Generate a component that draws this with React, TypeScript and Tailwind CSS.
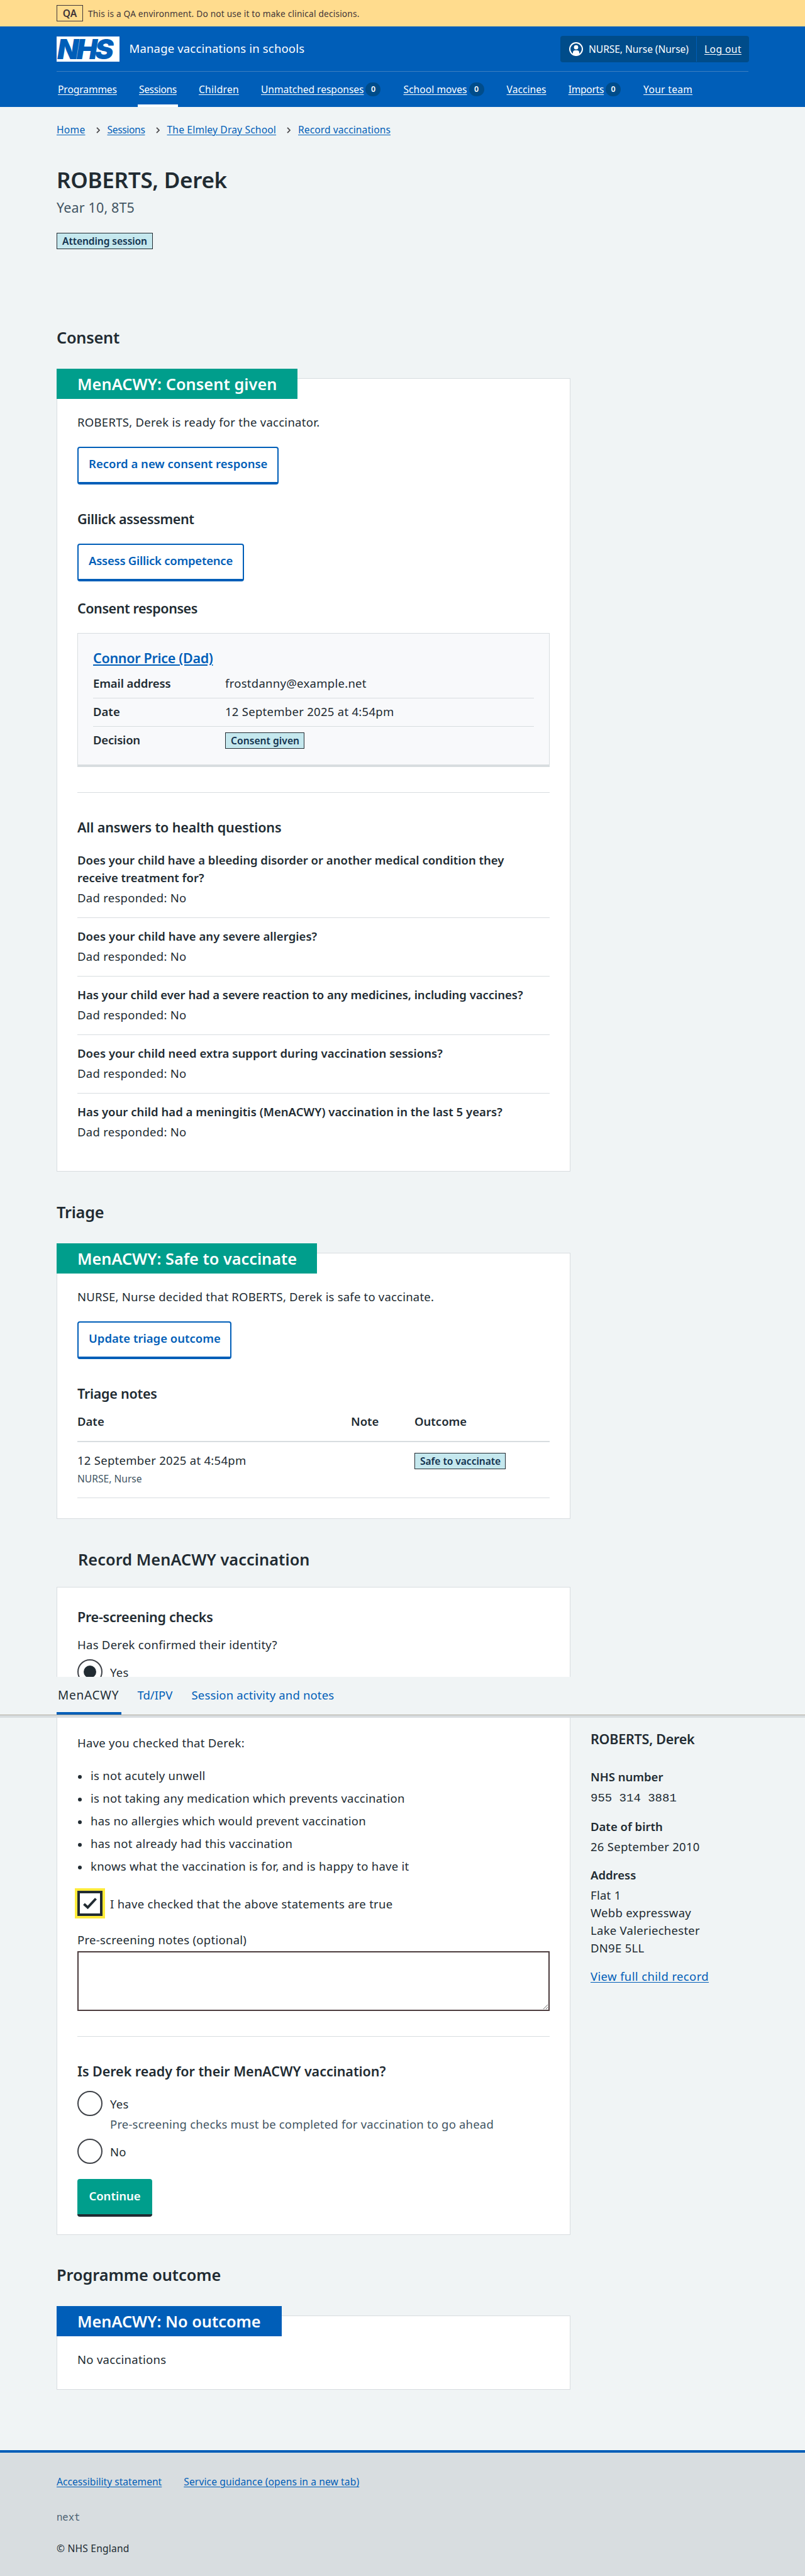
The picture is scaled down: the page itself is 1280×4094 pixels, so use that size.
import type { ReactNode } from "react";

const body = "text-[18.5px] leading-7 tracking-[0.015em]";
const bodyBold = "text-[18.5px] leading-7 font-semibold";
const small = "text-[15.6px] leading-6 whitespace-nowrap";
const heading = "text-[25.3px] leading-8 font-semibold whitespace-nowrap";
const subheading = "text-[21.5px] leading-8 font-semibold whitespace-nowrap";

function Tag({ children, className = "" }: { children: ReactNode; className?: string }) {
  return (
    <strong
      className={`inline-block h-[26px] border border-[#212b32] bg-[#c5e8ee] px-2 text-[15.6px] leading-6 font-semibold whitespace-nowrap text-[#12324f] ${className}`}
    >
      {children}
    </strong>
  );
}

function Card({ label, tone, labelClass = "", className = "", children }: { label?: string; tone?: string; labelClass?: string; className?: string; children: ReactNode }) {
  return (
    <section className={`relative border border-[#d8dde0] bg-white px-8 ${className}`}>
      {label && (
        <h3 className={`absolute -top-4 -left-px h-12 py-2 pl-[33px] text-white ${heading} ${tone} ${labelClass}`}>{label}</h3>
      )}
      {children}
    </section>
  );
}

function OutlineButton({ children, className = "" }: { children: ReactNode; className?: string }) {
  return (
    <button
      className={`block h-[60px] rounded-[4px] border-2 border-b-4 border-[#005eb8] bg-white pb-1 pl-4 text-left text-[18.5px] leading-7 font-semibold whitespace-nowrap text-[#005eb8] ${className}`}
    >
      {children}
    </button>
  );
}

function Question({ children, last = false, className = "" }: { children: ReactNode; last?: boolean; className?: string }) {
  return (
    <div className={last ? "pt-[15px]" : "border-b border-[#d8dde0] pt-[15px] pb-[17px]"}>
      <dt className={`${bodyBold} ${className}`}>{children}</dt>
      <dd className={`mt-1 ${body}`}>Dad responded: No</dd>
    </div>
  );
}

function Radio({ label, checked = false }: { label: string; checked?: boolean }) {
  return (
    <label className="flex h-10 gap-3">
      <span className="flex size-10 shrink-0 items-center justify-center rounded-full border-2 border-[#3f4248] bg-white">
        {checked && <span className="size-5 rounded-full bg-[#212b32]" />}
      </span>
      <span className={`mt-[7px] ${body}`}>{label}</span>
    </label>
  );
}

const navItems = [
  { label: "Programmes", track: "tracking-[-0.006em]" },
  { label: "Sessions", track: "tracking-[-0.023em]", current: true },
  { label: "Children", track: "tracking-[0.019em]" },
  { label: "Unmatched responses", track: "tracking-[-0.003em]", count: 0 },
  { label: "School moves", track: "tracking-[0.003em]", count: 0 },
  { label: "Vaccines", track: "tracking-[0.003em]" },
  { label: "Imports", track: "tracking-[-0.018em]", count: 0 },
  { label: "Your team", track: "tracking-[0.019em]" },
];

const crumbs = [
  { label: "Home", track: "tracking-[0.018em]" },
  { label: "Sessions", track: "tracking-[-0.023em]" },
  { label: "The Elmley Dray School", track: "tracking-[0.011em]" },
  { label: "Record vaccinations", track: "tracking-[0.005em]" },
];

const statements = [
  "is not acutely unwell",
  "is not taking any medication which prevents vaccination",
  "has no allergies which would prevent vaccination",
  "has not already had this vaccination",
  "knows what the vaccination is for, and is happy to have it",
];

const link = "underline decoration-1 underline-offset-2";

function Header() {
  return (
    <header>
      <div className="flex h-[42px] items-center bg-[#ffdc8e] px-[90px] text-[#3f3538]">
        <strong className="h-[26px] w-[42px] border border-[#3f3538] text-center text-[15.6px] leading-6 font-semibold">QA</strong>
        <span className="ml-2 pt-px text-[13.7px] leading-6 tracking-[0.014em]">
          This is a QA environment. Do not use it to make clinical decisions.
        </span>
      </div>
      <div className="h-32 bg-[#005eb8] px-[90px] text-white">
        <div className="flex h-[72px] border-b border-[#3c7fc0]">
          <div className="mt-4 flex h-10 w-[100px] items-center bg-white pl-px font-[Inter] text-[44.500px] leading-10 font-black tracking-[-0.085em] text-[#005eb8] italic">
            NHS
          </div>
          <span className="mt-[21px] ml-[15.5px] text-[18.5px] leading-7 tracking-[0.009em]">Manage vaccinations in schools</span>
          <div className="mt-[15px] -mr-px ml-auto flex h-[42px] w-[300px] items-center rounded-[4px] bg-[#004c8a]">
            <svg viewBox="0 0 22 22" className="ml-3.5 size-[22px]">
              <circle cx="11" cy="11" r="10" fill="none" stroke="#fff" strokeWidth="2" />
              <circle cx="11" cy="8.2" r="3.4" fill="#fff" />
              <path d="M6 20v-3.500a3.600 3.600 0 0 1 3.600-3.600h2.800A3.600 3.600 0 0 1 16 16.500V20a10 10 0 0 1-10 0Z" fill="#fff" />
            </svg>
            <span className={`ml-[9px] w-[171px] tracking-[-0.004em] ${small}`}>NURSE, Nurse (Nurse)</span>
            <span className="h-10 w-px bg-[#005eb8]" />
            <a className={`ml-3 tracking-[0.028em] ${small} ${link}`}>Log out</a>
          </div>
        </div>
        <nav className="flex h-14 gap-[31px]">
          {navItems.map((n) => (
            <div
              key={n.label}
              className={`flex items-start px-0.5 pt-4 ${n.current ? "border-b-4 border-white" : ""}`}
            >
              <a className={`${small} ${link} ${n.track}`}>{n.label}</a>
              {n.count !== undefined && (
                <span className="mt-px mr-px ml-[3px] flex h-[22px] w-6 items-center justify-center rounded-full bg-[#004c8a] text-[12.5px] leading-none font-semibold">
                  {n.count}
                </span>
              )}
            </div>
          ))}
        </nav>
      </div>
    </header>
  );
}

function Consent() {
  return (
    <>
      <h2 className={`tracking-[-0.009em] ${heading}`}>Consent</h2>
      <Card label="MenACWY: Consent given" tone="bg-[#009e8c]" labelClass="w-[383px] tracking-[0.003em]" className="mt-[49px] pt-[55px] pb-12">
        <p className={body}>ROBERTS, Derek is ready for the vaccinator.</p>
        <OutlineButton className="mt-[25px] w-80">Record a new consent response</OutlineButton>
        <h4 className={`mt-[39px] tracking-[-0.017em] ${subheading}`}>Gillick assessment</h4>
        <OutlineButton className="mt-[23px] w-[265px] tracking-[-0.013em]">Assess Gillick competence</OutlineButton>
        <h4 className={`mt-[27px] tracking-[-0.02em] ${subheading}`}>Consent responses</h4>

        <div className="mt-[23px] border border-b-4 border-[#d8dde0] bg-[#f8f9fb] px-6 pt-[23px] pb-[25px]">
          <h5 className={`tracking-[-0.014em] text-[#005eb8] underline decoration-2 underline-offset-2 ${subheading}`}>Connor Price (Dad)</h5>
          <dl className="mt-2.5">
            <div className="flex border-b border-[#d8dde0] pb-[9px]">
              <dt className={`w-[210px] tracking-[-0.006em] ${bodyBold}`}>Email address</dt>
              <dd className={body}>frostdanny@example.net</dd>
            </div>
            <div className="flex border-b border-[#d8dde0] pt-[7px] pb-[9px]">
              <dt className={`w-[210px] ${bodyBold}`}>Date</dt>
              <dd className={body}>12 September 2025 at 4:54pm</dd>
            </div>
            <div className="flex pt-[7px]">
              <dt className={`w-[210px] tracking-[-0.01em] ${bodyBold}`}>Decision</dt>
              <dd className="h-7 pt-[2px] leading-none">
                <Tag className="w-[126px] tracking-[0.003em]">Consent given</Tag>
              </dd>
            </div>
          </dl>
        </div>

        <hr className="mt-10 border-[#d8dde0]" />
        <h4 className={`mt-[39px] tracking-[-0.006em] ${subheading}`}>All answers to health questions</h4>
        <dl className="mt-[7px]">
          <Question className="pr-8">Does your child have a bleeding disorder or another medical condition they receive treatment for?</Question>
          <Question className="tracking-[0.003em]">Does your child have any severe allergies?</Question>
          <Question className="tracking-[-0.002em]">Has your child ever had a severe reaction to any medicines, including vaccines?</Question>
          <Question className="tracking-[0.002em]">Does your child need extra support during vaccination sessions?</Question>
          <Question last className="tracking-[0.002em]">Has your child had a meningitis (MenACWY) vaccination in the last 5 years?</Question>
        </dl>
      </Card>
    </>
  );
}

function Triage() {
  return (
    <>
      <h2 className={`mt-12 tracking-[-0.009em] ${heading}`}>Triage</h2>
      <Card label="MenACWY: Safe to vaccinate" tone="bg-[#009e8c]" labelClass="w-[414px]" className="mt-[49px] pt-[55px] pb-8">
        <p className="text-[18.5px] leading-7 tracking-[0.011em]">NURSE, Nurse decided that ROBERTS, Derek is safe to vaccinate.</p>
        <OutlineButton className="mt-[25px] w-[245px]">Update triage outcome</OutlineButton>
        <h4 className={`mt-[39px] tracking-[-0.012em] ${subheading}`}>Triage notes</h4>
        <div className={`mt-3.5 flex border-b-2 border-[#d8dde0] pb-[17px] ${bodyBold}`}>
          <span className="w-[435px]">Date</span>
          <span className="w-[101px]">Note</span>
          <span>Outcome</span>
        </div>
        <div className="flex border-b border-[#d8dde0] pt-[15px] pb-[18px]">
          <div className="w-[536px]">
            <p className={body}>12 September 2025 at 4:54pm</p>
            <p className={`mt-[3px] text-[#425563] ${small}`}>NURSE, Nurse</p>
          </div>
          <div className="pt-0.5">
            <Tag className="w-[145px] tracking-[-0.003em]">Safe to vaccinate</Tag>
          </div>
        </div>
      </Card>
    </>
  );
}

function RecordVaccination() {
  return (
    <>
      <h2 className={`mt-12 pl-[34px] tracking-[0.003em] ${heading}`}>Record MenACWY vaccination</h2>
      <Card className="mt-7 pt-[31px] pb-7">
        <h4 className={`tracking-[-0.012em] ${subheading}`}>Pre-screening checks</h4>
        <p className={`mt-3.5 mb-[9px] ${body}`}>Has Derek confirmed their identity?</p>
        <Radio label="Yes" checked />
        <p className={`mt-[79px] ${body}`}>Have you checked that Derek:</p>
        <ul className="mt-6 flex flex-col gap-2">
          {statements.map((s) => (
            <li key={s} className={`flex items-center gap-3.5 ${body}`}>
              <span className="mt-1 ml-px size-[6px] rounded-full bg-[#212b32]" />
              {s}
            </li>
          ))}
        </ul>
        <label className="mt-[25px] flex h-10 gap-3">
          <span className="flex size-10 shrink-0 items-center justify-center border-4 border-[#212b32] bg-white ring-4 ring-[#ffeb3b]">
            <svg viewBox="0 0 24 20" className="-mt-px h-5 w-6" fill="none" stroke="#212b32" strokeWidth="4">
              <path d="M2.5 11 8.500 16.500 21.500 2.500" />
            </svg>
          </span>
          <span className={`mt-[7px] ${body}`}>I have checked that the above statements are true</span>
        </label>
        <p className={`mt-6 ${body}`}>Pre-screening notes (optional)</p>
        <textarea className="mt-1 block h-[95px] w-full resize-y border-2 border-[#4c3c3e] bg-white" />
        <hr className="mt-10 border-[#d8dde0]" />
        <h4 className={`mt-[39px] mb-[15px] tracking-[-0.002em] ${subheading}`}>Is Derek ready for their MenACWY vaccination?</h4>
        <Radio label="Yes" />
        <p className="-mt-px mb-[9px] ml-[52px] text-[18.5px] leading-7 tracking-[0.01em] text-[#425563]">
          Pre-screening checks must be completed for vaccination to go ahead
        </p>
        <Radio label="No" />
        <button className="mt-6 block h-[60px] w-[119px] rounded-[4px] border-b-4 border-[#212b32] bg-[#009e8c] pb-0.5 text-[18.5px] leading-7 font-semibold text-white">
          Continue
        </button>
      </Card>
    </>
  );
}

function Sidebar() {
  return (
    <aside className="ml-8 pt-[2228px]">
      <h3 className={`tracking-[-0.011em] ${subheading}`}>ROBERTS, Derek</h3>
      <p className={`mt-[30px] ${bodyBold}`}>NHS number</p>
      <p className="mt-1.5 font-['Liberation_Mono',monospace] text-[19px] leading-7 whitespace-pre">955 314 3881</p>
      <p className={`mt-[17px] ${bodyBold}`}>Date of birth</p>
      <p className={`mt-1 ${body}`}>26 September 2010</p>
      <p className={`mt-[17px] ${bodyBold}`}>Address</p>
      <p className={`mt-1 ${body}`}>
        Flat 1<br />Webb expressway<br />Lake Valeriechester<br />DN9E 5LL
      </p>
      <a className={`mt-[17px] block text-[18.5px] leading-7 tracking-[0.02em] text-[#005eb8] ${link}`}>View full child record</a>
    </aside>
  );
}

function SessionTabs() {
  return (
    <nav className="absolute top-[2665px] right-0 left-0 border-b-4 border-[#d8dde0] bg-[#f0f4f5]">
      <div className="flex h-[61px] border-b border-[#b0ab9f] px-[90px] text-[18.5px] leading-7 text-[#005eb8]">
        <a className="w-[102.500px] border-b-4 border-[#005eb8] pt-[15px] pl-0.5 text-[19px] tracking-[0.04em] text-[#212b32]">MenACWY</a>
        <a className="ml-[26px] w-[86px] pt-[15px]">Td/IPV</a>
        <a className="pt-[15px] tracking-[0.008em]">Session activity and notes</a>
      </div>
    </nav>
  );
}

export default function App() {
  return (
    <div className="relative h-[4094px] w-[1280px] bg-[#f0f4f5] font-['Noto_Sans',sans-serif] text-[#212b32]">
      <Header />
      <main className="px-[90px]">
        <nav className="flex pt-6">
          {crumbs.map((c, i) => (
            <div key={c.label} className="flex items-start">
              {i > 0 && (
                <svg viewBox="0 0 6 10" className="mt-2 mr-3 ml-[17px] h-2.5 w-1.5" fill="none" stroke="#4c4a4c" strokeWidth="1.800">
                  <path d="M1 .8 5 5 1 9.200" />
                </svg>
              )}
              <a className={`text-[#005eb8] ${small} ${link} ${c.track}`}>{c.label}</a>
            </div>
          ))}
        </nav>
        <h1 className="mt-[46px] text-[35px] leading-11 font-semibold tracking-[-0.008em]">ROBERTS, Derek</h1>
        <p className="mt-1.5 text-[21.5px] leading-8 tracking-[0.007em] text-[#425563]">Year 10, 8T5</p>
        <Tag className="mt-6 block w-[153px] tracking-[-0.005em]">Attending session</Tag>

        <div className="mt-[124px] flex">
          <div className="w-[817px] shrink-0">
            <Consent />
            <Triage />
            <RecordVaccination />
            <h2 className={`mt-[47px] tracking-[-0.002em] ${heading}`}>Programme outcome</h2>
            <Card label="MenACWY: No outcome" tone="bg-[#005eb8]" labelClass="w-[358px]" className="mt-[49px] pt-[55px] pb-[33px]">
              <p className={body}>No vaccinations</p>
            </Card>
          </div>
          <Sidebar />
        </div>
      </main>
      <SessionTabs />
      <footer className="mt-24 h-[200px] border-t-4 border-[#005eb8] bg-[#d8dde0] px-[90px] pt-[34px]">
        <div className={`flex gap-[35px] text-[#005eb8] ${small}`}>
          <a className={`tracking-[0.001em] ${link}`}>Accessibility statement</a>
          <a className={`tracking-[0.007em] ${link}`}>Service guidance (opens in a new tab)</a>
        </div>
        <p className="mt-8 font-['Noto_Sans_Mono','Liberation_Mono',monospace] text-[15.6px] leading-6 text-[#4c6272]">next</p>
        <p className={`mt-[26px] tracking-[0.013em] ${small}`}>© NHS England</p>
      </footer>
    </div>
  );
}
